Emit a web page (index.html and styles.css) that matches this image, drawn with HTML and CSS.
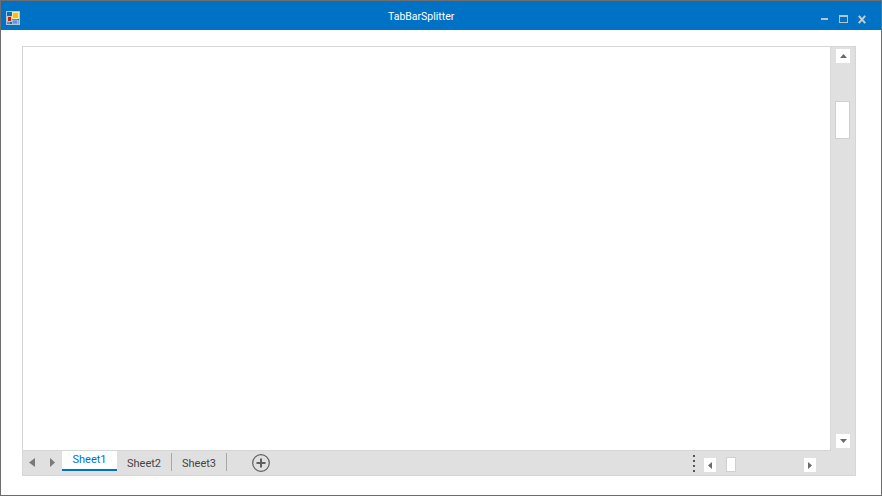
FILE: index.html
```html
<!DOCTYPE html>
<html lang="en">
<head>
<meta charset="utf-8">
<title>TabBarSplitter</title>
<link rel="stylesheet" href="styles.css">
</head>
<body>
<div class="window">
  <header class="titlebar">
    <svg class="app-icon" width="15" height="15" viewBox="0 0 15 15">
      <rect x="0.5" y="0.5" width="13" height="13" fill="none" stroke="#b9c3cc"/>
      <rect x="1" y="11" width="3" height="2" fill="#4f8fd8"/>
      <rect x="1.5" y="5.5" width="4" height="5" fill="#b8231a" stroke="#e5c29a"/>
      <rect x="6.5" y="1.5" width="6" height="6" fill="#f6bd1e" stroke="#fbe9a0"/>
      <rect x="6.5" y="9" width="5" height="4" fill="#5f93e2" stroke="#a9c8f0" stroke-width="0.8"/>
      <rect x="12" y="9" width="1" height="4" fill="#7fb0e8"/>
    </svg>
    <span class="title">TabBarSplitter</span>
    <div class="caption-buttons">
      <svg width="8" height="8" viewBox="0 0 8 8"><rect x="0" y="3" width="7" height="2" fill="#b8c4d0"/></svg>
      <svg width="9" height="8" viewBox="0 0 9 8"><rect x="0.5" y="0.5" width="8" height="7" fill="none" stroke="#b8c4d0"/><rect x="0" y="0" width="9" height="2" fill="#b8c4d0"/></svg>
      <svg width="8" height="9" viewBox="0 0 8 9"><path d="M0.8 0.8 L7.2 8.2 M7.2 0.8 L0.8 8.2" stroke="#c4ccd4" stroke-width="2" fill="none"/></svg>
    </div>
  </header>
  <main class="content">
    <section class="grid">
      <div class="grid-top">
        <div class="cells"></div>
        <div class="vscroll">
          <button class="sb-btn"><svg width="7" height="4" viewBox="0 0 7 4"><path d="M3.5 0 L7 4 H0 Z" fill="#6a6a6a"/></svg></button>
          <div class="vthumb"></div>
          <button class="sb-btn sb-end"><svg width="7" height="4" viewBox="0 0 7 4"><path d="M0 0 H7 L3.5 4 Z" fill="#6a6a6a"/></svg></button>
        </div>
      </div>
      <footer class="tabbar">
        <div class="tab-nav">
          <svg width="6" height="9" viewBox="0 0 6 9"><path d="M6 0 V9 L0 4.5 Z" fill="#7a7a7a"/></svg>
          <svg width="5" height="9" viewBox="0 0 5 9"><path d="M0 0 V9 L5 4.5 Z" fill="#7a7a7a"/></svg>
        </div>
        <div class="tab active">Sheet1</div>
        <div class="tab">Sheet2</div>
        <div class="tab">Sheet3</div>
        <svg class="add" width="18" height="18" viewBox="0 0 18 18">
          <circle cx="9" cy="9" r="8.3" fill="none" stroke="#5f5f5f" stroke-width="1.2"/>
          <path d="M9 4.5 V13.5 M4.5 9 H13.5" stroke="#5f5f5f" stroke-width="2"/>
        </svg>
        <div class="splitter"><i></i><i></i><i></i><i></i></div>
        <div class="hscroll">
          <button class="sb-btn hbtn"><svg width="4" height="7" viewBox="0 0 4 7"><path d="M4 0 V7 L0 3.5 Z" fill="#6a6a6a"/></svg></button>
          <div class="hthumb"></div>
          <button class="sb-btn hbtn hend"><svg width="4" height="7" viewBox="0 0 4 7"><path d="M0 0 V7 L4 3.5 Z" fill="#6a6a6a"/></svg></button>
        </div>
      </footer>
    </section>
  </main>
</div>
</body>
</html>
```
FILE: styles.css
```css
* { box-sizing: border-box; }
html, body { margin: 0; padding: 0; background: #fff; }
body { font-family: Roboto, "Liberation Sans", sans-serif; }
.window {
  width: 882px;
  height: 496px;
  border: 1px solid #6d6d6d;
  display: flex;
  flex-direction: column;
  background: #fff;
  overflow: hidden;
}
.titlebar {
  height: 29px;
  flex: none;
  background: #0072c6;
  display: flex;
  align-items: center;
  position: relative;
  padding: 0 15px 0 5px;
  color: #fff;
}
.app-icon { flex: none; margin-top: 5px; display: block; }
.title {
  position: absolute;
  left: 387px;
  top: 8px;
  font-size: 10.5px;
  line-height: 16px;
}
.caption-buttons {
  margin-left: auto;
  display: flex;
  gap: 10px;
  align-items: center;
  margin-top: 7px;
}
.caption-buttons svg { display: block; }
.content {
  flex: 1;
  min-height: 0;
  padding: 16px 25px 19px 21px;
  display: flex;
}
.grid {
  flex: 1;
  border: 1px solid #d6d6d6;
  display: flex;
  flex-direction: column;
  background: #e0e0e0;
}
.grid-top { flex: 1; min-height: 0; display: flex; }
.cells {
  flex: 1;
  background: #fff;
  border-right: 1px solid #d6d6d6;
  border-bottom: 1px solid #d6d6d6;
}
.vscroll {
  width: 24px;
  flex: none;
  display: flex;
  flex-direction: column;
  align-items: flex-start;
  padding: 2px 0 3px 4px;
}
.vscroll .sb-btn { width: 14px; margin-left: 1px; }
.sb-btn {
  width: 14px;
  height: 14px;
  padding: 0;
  border: 0;
  background: #fff;
  display: flex;
  align-items: center;
  justify-content: center;
  flex: none;
}
.sb-btn svg { display: block; }
.vthumb {
  width: 15px;
  height: 38px;
  margin-top: 38px;
  background: #fff;
  border: 1px solid #d0d0d0;
}
.vscroll .sb-end { margin-top: auto; }
.tabbar {
  height: 24px;
  flex: none;
  display: flex;
  align-items: flex-start;
  color: #444;
  background: #e0e0e0;
}
.tab-nav {
  width: 39px;
  height: 23px;
  flex: none;
  display: flex;
  align-items: center;
  gap: 15px;
  padding-left: 6px;
}
.tab-nav svg { display: block; }
.tab {
  width: 55px;
  height: 18px;
  margin-top: 2px;
  padding-top: 4px;
  display: flex;
  align-items: center;
  justify-content: center;
  border-right: 1px solid #a8a8a8;
  font-size: 11px;
  line-height: 16px;
}
.tab.active {
  background: #fff;
  color: #0072c6;
  border-right: 0;
  border-bottom: 2px solid #0072c6;
  height: 20px;
  margin-top: 0;
  padding-top: 1px;
  padding-bottom: 1px;
}
.add { flex: none; margin: 3px 0 0 25px; display: block; }
.splitter {
  margin-left: auto;
  flex: none;
  width: 4px;
  height: 17px;
  margin-top: 4px;
  display: flex;
  flex-direction: column;
  justify-content: space-between;
  align-items: center;
}
.splitter i { display: block; width: 2px; height: 2px; background: #555; }
.hscroll {
  width: 151px;
  flex: none;
  margin-left: 8px;
  margin-top: 6px;
  padding-right: 39px;
  display: flex;
  align-items: flex-start;
}
.hbtn { width: 12px; height: 14px; margin-top: 1px; }
.hthumb {
  width: 10px;
  height: 15px;
  margin-left: 10px;
  background: #fff;
  border: 1px solid #d0d0d0;
}
.hend { margin-left: auto; }
```
